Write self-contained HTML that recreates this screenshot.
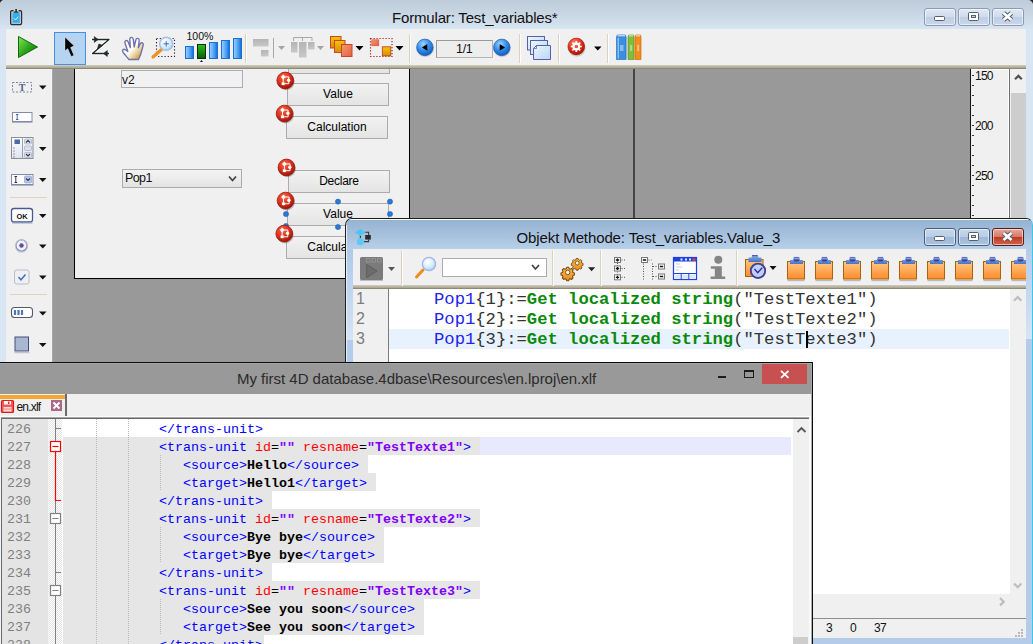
<!DOCTYPE html>
<html>
<head>
<meta charset="utf-8">
<title>Formular: Test_variables</title>
<style>
html,body{margin:0;padding:0;}
body{width:1033px;height:644px;overflow:hidden;position:relative;background:#999;font-family:"Liberation Sans",sans-serif;font-size:12px;color:#000;}
div,span,svg{position:absolute;box-sizing:border-box;}
.t{white-space:pre;line-height:1;}
/* ---------- 4D form window ---------- */
#fw{left:0;top:0;width:1033px;height:644px;background:#d8e5f2;}
#fw .title{left:0;top:0;width:1033px;height:29px;background:linear-gradient(#beccda,#c8d5e3 45%,#d7e4f1);}
#fw .cap{left:392px;top:10px;font-size:15px;letter-spacing:-0.17px;color:#111;}
.wb{border:1px solid #8c9bb3;border-radius:3px;background:linear-gradient(#dfe8f5,#cfdbec 48%,#bfcee4 52%,#cad7ea);box-shadow:inset 0 0 0 1px rgba(255,255,255,.55);}
#fw .tb{left:6px;top:29px;width:1020px;height:36px;background:#f0f0f0;}
#fw .tbb{left:6px;top:65px;width:1020px;height:4px;background:linear-gradient(#cbc7b4 0,#cbc7b4 25%,#bcb8a4 25%,#bcb8a4 50%,#adaa97 50%,#adaa97 75%,#8b8979 75%);}
#fw .work{left:6px;top:69px;width:1020px;height:575px;background:#999;}
#fw .pal{left:6px;top:69px;width:46px;height:575px;background:#f0f0f0;}
#form{left:74px;top:60px;width:336px;height:219px;background:#f0f0f0;border:1px solid #000;}
.btn{height:23px;border:1px solid #acacac;background:linear-gradient(#f2f2f2,#ebebeb 50%,#e4e4e4);font-size:12px;text-align:center;line-height:20px;color:#000;}
.rc{width:18px;height:18px;}
.wa{border-color:#4c5d7e;background:linear-gradient(#c6d7eb,#bacee6 48%,#9db8d8 52%,#abc4e0);}
.wc{border-color:#5c1a1a;background:linear-gradient(#e6aa9c,#d67a68 48%,#be3a22 52%,#d0644c);}
.sep{width:1px;background:#d8d4c4;border-right:1px solid #fff;box-sizing:content-box;}
.arr{width:0;height:0;border-left:4px solid transparent;border-right:4px solid transparent;border-top:4px solid #111;}
/* ---------- Method window ---------- */
#mw{left:345px;top:218px;width:688px;height:440px;border:1px solid #1c1c1c;border-right-color:#3cc6e8;border-radius:7px 7px 0 0;background:linear-gradient(#a9c3e6 0,#b4cceb 40px,#d6e4f5 121px,#b4cce9 121px);overflow:hidden;}
#mw .title{left:346px;top:219px;width:688px;height:31px;background:linear-gradient(#96b2d2,#a6c0dd 50%,#b8d1ea);box-shadow:inset 0 1px 0 #fafcfe;}
#mw .cap{left:516.500px;top:230px;font-size:15px;letter-spacing:-0.11px;color:#111;}
#mw .tb{left:353px;top:249px;width:673px;height:36px;background:#f0f0f0;}
#mw .tbb{left:353px;top:285px;width:673px;height:4px;background:linear-gradient(#cbc7b4 0,#cbc7b4 25%,#bcb8a4 25%,#bcb8a4 50%,#adaa97 50%,#adaa97 75%,#8b8979 75%);}
#mw .ed{left:353px;top:289px;width:673px;height:305px;background:#fff;}
.code{font-family:"Liberation Mono",monospace;font-size:17.2px;white-space:pre;line-height:20px;height:20px;left:434px;color:#333;margin-top:1px;}
.ln{font-size:16px;line-height:20px;left:356px;color:#7c7c7c;}
.kw{position:static;color:#0a8a0a;font-weight:bold;}
.v{position:static;color:#2222ee;}
/* ---------- Notepad++ window ---------- */
#np{left:0;top:362px;width:813px;height:300px;background:#999;border-top:1px solid #0a0a0a;border-right:1px solid #0a0a0a;overflow:hidden;box-shadow:inset -1px 1px 0 #a6a6a6;}
#np .cap{left:237px;top:371px;font-size:15px;letter-spacing:-0.02px;color:#2a2a2a;}
#np .tabs{left:0;top:394px;width:812px;height:22px;background:#f0f0f0;}
.xl{font-family:"Liberation Mono",monospace;font-size:13.33px;white-space:pre;line-height:18px;height:18px;color:#000;margin-top:2px;}
.xl i{font-style:normal;color:#0000ff;}
.xl b{color:#000;}
.xl u{text-decoration:none;color:#ff0000;}
.xl s{text-decoration:none;color:#8000ff;font-weight:bold;}
.sel{background:#e6e6e6;height:18px;}
.num{font-family:"Liberation Mono",monospace;font-size:13.33px;line-height:18px;color:#808080;left:7px;margin-top:2px;}
</style>
</head>
<body>
<!-- ================= 4D FORM WINDOW ================= -->
<div id="fw">
  <div class="title"></div>
  <div class="t cap">Formular: Test_variables*</div>
  <div class="wb" style="left:924px;top:8px;width:32px;height:18px;"></div>
  <div class="wb" style="left:958px;top:8px;width:32px;height:18px;"></div>
  <div class="wb" style="left:992px;top:8px;width:32px;height:18px;"></div>
  <div class="tb"></div>
  <div class="tbb"></div>
  <svg id="ftb" width="1033" height="70" viewBox="0 0 1033 70" style="left:0;top:0;">
    <defs>
      <linearGradient id="gplay" x1="0" y1="0" x2="1" y2="1"><stop offset="0" stop-color="#8ae85a"/><stop offset=".5" stop-color="#2ea81c"/><stop offset="1" stop-color="#0a6a0a"/></linearGradient>
      <linearGradient id="gbar" x1="0" y1="0" x2="1" y2="0"><stop offset="0" stop-color="#9ed0fa"/><stop offset=".6" stop-color="#4a9ff0"/><stop offset="1" stop-color="#0a6ad8"/></linearGradient>
      <linearGradient id="gbarg" x1="0" y1="0" x2="0" y2="1"><stop offset="0" stop-color="#2fc01a"/><stop offset="1" stop-color="#075c07"/></linearGradient>
      <linearGradient id="gyel" x1="0" y1="0" x2="0" y2="1"><stop offset="0" stop-color="#f7c400"/><stop offset="1" stop-color="#d38f00"/></linearGradient>
      <linearGradient id="gsal" x1="0" y1="0" x2="1" y2="1"><stop offset="0" stop-color="#f79a72"/><stop offset="1" stop-color="#e0603c"/></linearGradient>
      <radialGradient id="gblue" cx=".4" cy=".3" r=".8"><stop offset="0" stop-color="#9fd4ff"/><stop offset=".5" stop-color="#2f8be8"/><stop offset="1" stop-color="#0a4eb0"/></radialGradient>
      <radialGradient id="gred" cx=".4" cy=".3" r=".8"><stop offset="0" stop-color="#ff8a70"/><stop offset=".5" stop-color="#e2301c"/><stop offset="1" stop-color="#8e0e06"/></radialGradient>
      <radialGradient id="glens" cx=".4" cy=".35" r=".7"><stop offset="0" stop-color="#ffffff"/><stop offset=".6" stop-color="#d6ecff"/><stop offset="1" stop-color="#9ccaf5"/></radialGradient>
      <linearGradient id="ggray" x1="0" y1="0" x2="0" y2="1"><stop offset="0" stop-color="#b4b4b4"/><stop offset="1" stop-color="#c8c8c8"/></linearGradient>
    </defs>
    <!-- app icon -->
    <rect x="10.700" y="10.700" width="10.800" height="13.800" rx="1.200" fill="#e9f1fa" stroke="#2e2e2e" stroke-width="1.400"/>
    <rect x="12.300" y="12.300" width="7.600" height="10.600" fill="#35b0ec"/>
    <rect x="13.600" y="9.800" width="5" height="2.700" fill="#cfdcec"/>
    <path d="M15.300 9h1.600v2.600h1.500v1.100h-4.600v-1.100h1.500z" fill="#2e2e2e"/>
    <path d="M14 18.300l1.500 1.600 2.800-3.300" stroke="#e6f5ff" stroke-width="1" fill="none"/>
    <!-- play -->
    <path d="M18.5 36.5L37.5 47 18.5 57.5z" fill="url(#gplay)" stroke="#0c6a0c" stroke-width="1" stroke-linejoin="round"/>
    <!-- selected tool -->
    <rect x="54.500" y="32.500" width="31" height="32" fill="#b4d4f2" stroke="#4a90e2"/>
    <path d="M65 37.300v13.500l2.800-2.200 3.500 7.900 2.500-1.300-3.300-7.600 3.500-1.800z" fill="#000" stroke="#fff" stroke-opacity=".45" stroke-width=".7"/>
    <!-- Z tool -->
    <path d="M92 39.500h17L92.500 53.500H109" fill="none" stroke="#fff" stroke-width="3.600" stroke-linejoin="round" stroke-linecap="round"/>
    <path d="M92 39.500h17L92.500 53.500H109" fill="none" stroke="#1e2a2a" stroke-width="1.300" stroke-linejoin="round"/>
    <path d="M94.300 36.600l3.800 2.900-3.800 2.900zM107.300 50.600l-3.800 2.900 3.800 2.900zM102.600 45.300l-5.200 3.800 1.400-5z" fill="#1e2a2a" stroke="#1e2a2a" stroke-width=".6" stroke-linejoin="round"/>
    <!-- hand -->
    <linearGradient id="ghand" x1="0" y1="0" x2="1" y2="1"><stop offset="0" stop-color="#ffffe8"/><stop offset=".5" stop-color="#fffef6"/><stop offset=".75" stop-color="#e2c07a"/><stop offset="1" stop-color="#a87414"/></linearGradient>
    <path d="M129 59.500C127 57 125 55 123.200 52.500C121.500 50 123.500 48.500 125.500 49.800L127.800 51.500L125 43C124.300 40.500 127.300 39.600 128.200 42L130.300 47.500L129.800 39.500C129.700 36.800 133 36.600 133.300 39.300L134.200 47L135.800 40C136.300 37.500 139.500 38 139.200 40.600L138.300 47.800L140.300 43.800C141.400 41.800 143.800 42.800 143.200 45C142 49.500 141.500 54 138.500 59.500Z" fill="url(#ghand)" stroke="#7072b0" stroke-width="1.400" stroke-linejoin="round"/>
    <!-- zoom -->
    <rect x="156.500" y="38.500" width="18" height="18" fill="none" stroke="#223" stroke-width="1.100" stroke-dasharray="1.200 2"/>
    <path d="M161.500 49.500l-8.500 7.500" stroke="#f09022" stroke-width="3.200" stroke-linecap="round"/>
    <circle cx="166.200" cy="43.800" r="6.600" fill="url(#glens)" stroke="#a9bfe0" stroke-width="1.400"/>
    <path d="M163.500 43.800h5.400M166.200 41.100v5.400" stroke="#4a66a8" stroke-width="1"/>
    <!-- 100% bars -->
    <text x="186.500" y="40" font-family="Liberation Sans, sans-serif" font-size="10.500" fill="#111">100%</text>
    <rect x="185.500" y="46.500" width="8" height="12" fill="url(#gbar)" stroke="#1c6fd6"/>
    <rect x="197.500" y="44.500" width="8" height="14" fill="url(#gbarg)" stroke="#0a300a"/>
    <rect x="209.500" y="42.500" width="8" height="16" fill="url(#gbar)" stroke="#1c6fd6"/>
    <rect x="221.500" y="40.500" width="8" height="18" fill="url(#gbar)" stroke="#1c6fd6"/>
    <rect x="233.500" y="38.500" width="8" height="20" fill="url(#gbar)" stroke="#1c6fd6"/>
    <path d="M200 62l1.500-2 1.500 2z" fill="#111"/>
    <!-- separators -->
    <g stroke="#d9d3bd" stroke-width="1"><path d="M245.500 34v29M409.500 34v29M519.500 34v29M558.500 34v29M607.500 34v29"/></g>
    <g stroke="#fff" stroke-width="1"><path d="M246.500 34v29M410.500 34v29M520.500 34v29M559.500 34v29M608.500 34v29"/></g>
    <!-- gray icon 1 -->
    <rect x="253" y="39" width="15.500" height="7.500" fill="url(#ggray)"/>
    <rect x="261" y="50" width="7.500" height="6.500" fill="url(#ggray)"/>
    <path d="M273.500 38v20" stroke="#a8a8a8" stroke-width="1"/>
    <path d="M278 46h7l-3.500 4z" fill="#a4a4a4"/>
    <!-- gray icon 2 -->
    <path d="M293.500 41v-3.500h18.500V41M302.500 37.500V41" fill="none" stroke="#a8a8a8" stroke-width="1"/>
    <rect x="291" y="42" width="6.500" height="10.500" fill="url(#ggray)"/>
    <rect x="299" y="42" width="7.500" height="15.500" fill="url(#ggray)"/>
    <rect x="308" y="42" width="6.500" height="7.500" fill="url(#ggray)"/>
    <path d="M317 46h7l-3.500 4z" fill="#a4a4a4"/>
    <!-- orange stack -->
    <rect x="330.500" y="36.500" width="10.500" height="11.500" fill="url(#gyel)" stroke="#c8452c"/>
    <rect x="334.500" y="40.500" width="10.500" height="12" fill="url(#gyel)" stroke="#c8452c"/>
    <rect x="341.500" y="44.500" width="10.500" height="12" fill="url(#gsal)" stroke="#c8452c"/>
    <path d="M355.500 46h8l-4 4.500z" fill="#000"/>
    <!-- dotted selection -->
    <rect x="370.500" y="38.500" width="21.500" height="18" fill="none" stroke="#b01818" stroke-width="1.200" stroke-dasharray="1.200 1.800"/>
    <rect x="371.800" y="39.800" width="7" height="6" fill="url(#gsal)" stroke="#d05238" stroke-width=".6"/>
    <rect x="382.300" y="46.800" width="8.500" height="9" fill="url(#gyel)" stroke="#b83a20" stroke-width=".8"/>
    <path d="M395.500 46h8l-4 4.500z" fill="#000"/>
    <!-- prev / page / next -->
    <ellipse cx="425.200" cy="49" rx="8.600" ry="8.200" fill="#000" opacity=".12"/>
    <circle cx="424.900" cy="47.400" r="8.300" fill="url(#gblue)" stroke="#2a5cae" stroke-width=".7"/>
    <path d="M427.300 44v6.800l-5.300-3.400z" fill="#000"/>
    <rect x="436.500" y="40.500" width="56" height="17" fill="#ededed" stroke="#b4b4b4"/>
    <path d="M436.500 57.500v-17h56" fill="none" stroke="#9a9a9a"/>
    <text x="464.200" y="52.800" text-anchor="middle" font-family="Liberation Sans, sans-serif" font-size="12.500" letter-spacing="-.4" fill="#111">1/1</text>
    <ellipse cx="502.100" cy="49" rx="8.600" ry="8.200" fill="#000" opacity=".12"/>
    <circle cx="501.800" cy="47.400" r="8.300" fill="url(#gblue)" stroke="#2a5cae" stroke-width=".7"/>
    <path d="M499.700 44v6.800l5.300-3.400z" fill="#000"/>
    <!-- windows icon -->
    <linearGradient id="gwin" x1="0" y1="0" x2="1" y2="1"><stop offset="0" stop-color="#eef6fd"/><stop offset="1" stop-color="#b4d8f2"/></linearGradient>
    <rect x="527.500" y="36.500" width="17" height="13.500" fill="url(#gwin)" stroke="#5a5ea8"/>
    <rect x="530.500" y="40.500" width="17" height="14" fill="url(#gwin)" stroke="#5a5ea8"/>
    <path d="M533.500 48.500l3-3h14v14h-17z" fill="url(#gwin)" stroke="#5a5ea8"/>
    <path d="M533.500 48.500h3v-3" fill="none" stroke="#5a5ea8" stroke-width=".8"/>
    <!-- red gear -->
    <ellipse cx="576.800" cy="48.300" rx="8.800" ry="8.400" fill="#000" opacity=".15"/>
    <circle cx="576.300" cy="46.500" r="8.400" fill="url(#gred)" stroke="#a01c10" stroke-width=".6"/>
    <circle cx="576.300" cy="46.500" r="2.900" fill="none" stroke="#fff" stroke-width="2.200"/>
    <g stroke="#fff" stroke-width="1.700"><path d="M576.300 41v2M576.300 50v2M570.800 46.500h2M579.800 46.500h2M572.400 42.600l1.400 1.400M578.800 49l1.400 1.400M572.400 50.400l1.400-1.400M578.800 44l1.400-1.400"/></g>
    <path d="M594 46.500h7.500l-3.750 4z" fill="#000"/>
    <!-- books -->
    <path d="M616.500 37l.8-2h8l.8 2v22.500h-9.600z" fill="#3a8ee0" stroke="#2a6fc0" stroke-width=".7"/>
    <path d="M617.600 38h1.400v20.500h-1.400z" fill="#9cd0fa" opacity=".8"/>
    <path d="M617.500 35.800h7.600" stroke="#e8f4ff" stroke-width="1"/>
    <path d="M628 37l.6-2h4.800l.6 2v22.500H628z" fill="#84bc3c" stroke="#5a9426" stroke-width=".7"/>
    <path d="M635 37l.6-2h4.800l.6 2v22.500H635z" fill="#f68c1a" stroke="#cc6a0a" stroke-width=".7"/>
    <path d="M628.800 35.800h4.400M635.800 35.800h4.400" stroke="#fff" stroke-width="1" opacity=".8"/>
    <path d="M620 45h3.500v6H620zM630 45h2.200v6H630zM637 45h2.200v6H637z" fill="#fff" opacity=".4"/>
    <!-- window button glyphs -->
    <g id="wglyph">
      <rect x="934.500" y="16.500" width="10" height="4" rx="1" fill="#fff" stroke="#555d6e" stroke-width="1"/>
      <rect x="968.500" y="12.500" width="10" height="8" rx="1" fill="#fff" stroke="#555d6e" stroke-width="1"/>
      <rect x="971.500" y="15.500" width="4" height="2" fill="#c9d6ea" stroke="#555d6e" stroke-width="1"/>
      <path d="M1003.500 13l8 7M1011.500 13l-8 7" stroke="#555d6e" stroke-width="4.800" stroke-linecap="butt"/>
      <path d="M1003.500 13l8 7M1011.500 13l-8 7" stroke="#fff" stroke-width="2.700" stroke-linecap="butt"/>
    </g>
    <path d="M1029 0h4v4c-.5-2-2-3.500-4-4z" fill="#222"/>
    <path d="M0 0h3c-1.500.5-2.500 1.500-3 3z" fill="#222"/>
  </svg>
  <div class="work" style="overflow:hidden;"><div style="left:-6px;top:-69px;width:1033px;height:644px;">
    <div id="form"></div>
    <!-- v2 input -->
    <div style="left:121px;top:70px;width:122px;height:18px;border:1px solid #abadb8;background:#f1f1f1;"></div>
    <div class="t" style="left:122px;top:74px;font-size:12px;color:#111;">v2</div>
    <!-- Pop1 -->
    <div style="left:122px;top:169px;width:120px;height:19px;border:1px solid #acacac;background:linear-gradient(#f3f3f3,#ececec 50%,#e2e2e2);"></div>
    <div class="t" style="left:125px;top:172px;font-size:12.5px;letter-spacing:-0.6px;color:#111;">Pop1</div>
    <!-- buttons -->
    <div class="btn" style="left:288px;top:51px;width:102px;"></div>
    <div class="btn" style="left:287px;top:83px;width:102px;"><span class="t" style="left:0;right:0;top:4px;">Value</span></div>
    <div class="btn" style="left:286px;top:116px;width:102px;"><span class="t" style="left:0;right:0;top:4px;">Calculation</span></div>
    <div class="btn" style="left:288px;top:170px;width:102px;"><span class="t" style="left:0;right:0;top:4px;letter-spacing:-.25px;">Declare</span></div>
    <div class="btn" style="left:287px;top:203px;width:102px;"><span class="t" style="left:0;right:0;top:4px;">Value</span></div>
    <div class="btn" style="left:286px;top:236px;width:102px;"><span class="t" style="left:0;right:0;top:4px;">Calculation</span></div>
    <svg width="1033" height="644" viewBox="0 0 1033 644" style="left:0;top:0;">
      <defs>
        <radialGradient id="grc" cx=".4" cy=".3" r=".75"><stop offset="0" stop-color="#f86a4c"/><stop offset=".55" stop-color="#d8301a"/><stop offset="1" stop-color="#8a1206"/></radialGradient>
        <g id="rc">
          <circle cx=".9" cy="1.300" r="8.500" fill="#000" opacity=".22"/>
          <circle cx="0" cy="0" r="8.400" fill="url(#grc)" stroke="#a01408" stroke-width=".8"/>
          <path d="M-2.100-3.600V2M-0.200-3.600H3.500V3.200H-0.600" stroke="#fff" stroke-width="1" fill="none"/>
          <path d="M-2.100-6.100l2.400 2.500-2.400 2.500-2.400-2.500z" fill="#fff"/>
          <rect x="-3.700" y="1.800" width="3.100" height="2.800" fill="#fff"/>
          <circle cx="3.300" cy="-0.300" r="1.700" fill="#fff"/>
        </g>
      </defs>
      <path d="M229 176.500l3.500 4 3.500-4" fill="none" stroke="#444" stroke-width="1.800"/>
      <g fill="#2a78d8" stroke="#1a58b0" stroke-width=".5">
        <circle cx="338" cy="201.600" r="2.600"/><circle cx="390" cy="201.600" r="2.600"/>
        <circle cx="286" cy="214" r="2.600"/><circle cx="390" cy="214" r="2.600"/>
        <circle cx="286" cy="226" r="2.600"/><circle cx="338" cy="227" r="2.600"/><circle cx="390" cy="226.500" r="2.600"/>
      </g>
      <use href="#rc" x="285.3" y="80.5"/><use href="#rc" x="284.6" y="113.6"/><use href="#rc" x="286.5" y="167.5"/><use href="#rc" x="285.6" y="200.6"/><use href="#rc" x="284.3" y="233.6"/>
    </svg>
    <!-- vertical guide line -->
    <div style="left:633px;top:69px;width:2px;height:300px;background:#464646;"></div>
    <!-- ruler -->
    <div style="left:970px;top:69px;width:1px;height:300px;background:#111;"></div>
    <div style="left:971px;top:69px;width:38px;height:300px;background:#f0f0f0;border-right:1px solid #fff;border-top:1px solid #fff;"></div><div style="left:1009px;top:69px;width:1px;height:300px;background:#707070;"></div>
    <div class="t" style="left:975px;top:70px;font-size:12px;letter-spacing:-.75px;color:#111;">150</div>
    <div class="t" style="left:975px;top:120px;font-size:12px;letter-spacing:-.75px;color:#111;">200</div>
    <div class="t" style="left:975px;top:170px;font-size:12px;letter-spacing:-.75px;color:#111;">250</div>
    <!-- scrollbar -->
    <div style="left:1010px;top:69px;width:16px;height:300px;background:#f0f0f0;"></div>
    <div style="left:1011px;top:93px;width:15px;height:200px;background:#cdcdcd;"></div>
    <div style="left:972px;top:75px;width:2px;height:300px;background:repeating-linear-gradient(#333 0,#333 1px,transparent 1px,transparent 10px);"></div>
    <svg width="16" height="16" viewBox="0 0 16 16" style="left:1010px;top:69px;"><path d="M5 10.300l3.400-3.400 3.400 3.400" fill="none" stroke="#505050" stroke-width="2.200"/></svg>
  </div></div>
  <div class="pal"></div>
  <div style="left:52px;top:69px;width:1px;height:575px;background:#a8a8a8;"></div>
  <svg width="60" height="644" viewBox="0 0 60 644" style="left:0;top:0;">
    <defs>
      <linearGradient id="gpb" x1="0" y1="0" x2="0" y2="1"><stop offset="0" stop-color="#fff"/><stop offset="1" stop-color="#dfe3ee"/></linearGradient>
    </defs>
    <g fill="#111">
      <path d="M39 85.500h7.500l-3.750 4z"/><path d="M39 115h7.500l-3.750 4z"/><path d="M39 147h7.500l-3.750 4z"/><path d="M39 178h7.500l-3.750 4z"/>
      <path d="M39 214h7.500l-3.750 4z"/><path d="M39 244.500h7.500l-3.750 4z"/><path d="M39 275.500h7.500l-3.750 4z"/><path d="M39 311.500h7.500l-3.750 4z"/><path d="M39 343h7.500l-3.750 4z"/>
    </g>
    <path d="M10 197.500h37M10 294.500h37" stroke="#ddd6bc" stroke-width="1"/>
    <!-- text -->
    <rect x="12.500" y="82.500" width="19" height="9.500" fill="none" stroke="#7a86a4" stroke-width="1" stroke-dasharray="2 1.500"/>
    <text x="22" y="90.500" text-anchor="middle" font-family="Liberation Serif, serif" font-weight="bold" font-size="10" fill="#4c5e92">T</text>
    <!-- input -->
    <rect x="12.500" y="112.500" width="19.500" height="9" fill="#fff" stroke="#7d8cb0"/>
    <path d="M12 122.500h20.500" stroke="#b0b4c0" stroke-width="1"/>
    <path d="M16 114.500h2.400M16 119.500h2.400M17.200 114.500v5" stroke="#3c5a9a" stroke-width=".9" fill="none"/>
    <!-- list -->
    <rect x="11.500" y="137.500" width="21.500" height="21" fill="url(#gpb)" stroke="#8a8f9c"/>
    <path d="M22.500 137.500v21" stroke="#9aa0ae"/>
    <rect x="14.500" y="139.500" width="5.500" height="4.500" fill="#4a6aa8"/>
    <path d="M14 147.500v10" stroke="#445" stroke-width="1" stroke-dasharray="1 2"/>
    <rect x="24.500" y="139" width="7" height="5" rx="1" fill="#dbe1ef" stroke="#9aa3bb" stroke-width=".6"/>
    <rect x="24.500" y="146" width="7" height="4.500" rx="1" fill="#dbe1ef" stroke="#9aa3bb" stroke-width=".6"/>
    <rect x="24.500" y="152.500" width="7" height="5" rx="1" fill="#dbe1ef" stroke="#9aa3bb" stroke-width=".6"/>
    <path d="M26 142.500l2-2 2 2M26 154l2 2 2-2" stroke="#334" stroke-width="1.100" fill="none"/>
    <!-- combo -->
    <rect x="11.500" y="174.500" width="21.500" height="10" fill="#fff" stroke="#7d8cb0"/>
    <path d="M11 185.500h22.500" stroke="#b0b4c0"/>
    <path d="M14.500 176.500h2.600M14.500 182.500h2.600M15.800 176.500v6" stroke="#223" stroke-width=".9" fill="none"/>
    <rect x="24.500" y="176" width="7" height="7" rx="1" fill="#b8c6e4" stroke="#8a98bc" stroke-width=".6"/>
    <path d="M26 178.500l2 2 2-2" stroke="#2c3c6c" stroke-width="1.200" fill="none"/>
    <!-- OK -->
    <rect x="11.500" y="208.500" width="21" height="13.500" rx="2.500" fill="#fff" stroke="#4a5a90" stroke-width="1.300"/>
    <path d="M12 223h20.500" stroke="#9aa3c0" stroke-width="1"/>
    <text x="22" y="219" text-anchor="middle" font-family="Liberation Sans, sans-serif" font-weight="bold" font-size="7.500" fill="#111">OK</text>
    <!-- radio -->
    <circle cx="21.500" cy="245.500" r="5.600" fill="#eef2f8" stroke="#8696b8" stroke-width="1.400"/>
    <circle cx="21.500" cy="246.300" r="6.200" fill="none" stroke="#c4c8d2" stroke-width=".8"/>
    <circle cx="21.500" cy="245.500" r="2.200" fill="#6a4a98"/>
    <!-- check -->
    <rect x="14.500" y="270" width="14.500" height="14" rx="2" fill="#eef0f4" stroke="#b8bcc6"/>
    <path d="M18.500 277l2.500 2.800 4.500-5.300" stroke="#3c74c0" stroke-width="1.500" fill="none"/>
    <!-- progress -->
    <rect x="11.500" y="307.500" width="21" height="10" rx="3" fill="#fff" stroke="#555a6a" stroke-width="1.100"/>
    <path d="M15 310v5M18.500 310v5M22 310v5" stroke="#4a78b4" stroke-width="2.200"/>
    <!-- square -->
    <rect x="15" y="337" width="13.500" height="14" fill="#a8b8d0" stroke="#444c7c" stroke-width="1"/>
    <path d="M14.500 352.500h15" stroke="#c0c4cc" stroke-width="1.500"/>
  </svg>
</div>
<!-- ================= METHOD WINDOW ================= -->
<div id="mw"><div id="mwi" style="left:-346px;top:-219px;width:1033px;height:660px;">
  <div class="title"></div>
  <div class="t cap">Objekt Methode: Test_variables.Value_3</div>
  <div class="wb wa" style="left:924px;top:228px;width:32px;height:18px;"></div>
  <div class="wb wa" style="left:958px;top:228px;width:32px;height:18px;"></div>
  <div class="wb wc" style="left:992px;top:228px;width:32px;height:18px;"></div>
  <div class="tb"></div>
  <div class="tbb"></div>
  <div class="ed"></div>
  <!-- gutter -->
  <div style="left:353px;top:289px;width:35px;height:305px;background:#f0f0f0;"></div>
  <div style="left:388px;top:289px;width:1px;height:305px;background:#7c7c7c;"></div>
  <div style="left:389px;top:329px;width:620px;height:20px;background:#e8f2fe;"></div>
  <div class="t ln" style="top:289px;">1</div>
  <div class="t ln" style="top:309px;">2</div>
  <div class="t ln" style="top:329px;">3</div>
  <div class="code" style="top:289px;"><span class="v">Pop1</span>{1}:=<span class="kw">Get localized string</span>("TestTexte1")</div>
  <div class="code" style="top:309px;"><span class="v">Pop1</span>{2}:=<span class="kw">Get localized string</span>("TestTexte2")</div>
  <div class="code" style="top:329px;"><span class="v">Pop1</span>{3}:=<span class="kw">Get localized string</span>("TestTexte3")</div>
  <div style="left:806px;top:331px;width:2px;height:17px;background:#000;"></div>
  <!-- search box -->
  <div style="left:442px;top:258px;width:105px;height:19px;background:#fff;border:1px solid #abadb3;"></div>
  <!-- scrollbars -->
  <div style="left:1010px;top:289px;width:16px;height:305px;background:#f0f0f0;"></div>
  <div style="left:353px;top:594px;width:673px;height:24px;background:#f0f0f0;"></div>
  <div style="left:353px;top:618px;width:673px;height:1px;background:#8e8e8e;"></div>
  <div style="left:353px;top:619px;width:673px;height:19px;background:#f0f0f0;"></div>
  <div class="t" style="left:826px;top:622px;font-size:12px;color:#111;">3</div>
  <div class="t" style="left:850px;top:622px;font-size:12px;color:#111;">0</div>
  <div class="t" style="left:874px;top:622px;font-size:12px;letter-spacing:-.6px;color:#111;">37</div>
    <svg width="1033" height="644" viewBox="0 0 1033 644" style="left:0;top:0;">
    <defs>
      <linearGradient id="gcb" x1="0" y1="0" x2="0" y2="1"><stop offset="0" stop-color="#ffc888"/><stop offset=".45" stop-color="#ffad5c"/><stop offset="1" stop-color="#ff8a2c"/></linearGradient>
      <linearGradient id="gcl" x1="0" y1="0" x2="0" y2="1"><stop offset="0" stop-color="#8ab0e8"/><stop offset="1" stop-color="#4a74c0"/></linearGradient>
      <linearGradient id="ggear" x1="0" y1="0" x2="0" y2="1"><stop offset="0" stop-color="#fbc050"/><stop offset="1" stop-color="#e88c18"/></linearGradient>
      <g id="clip">
        <rect x=".5" y="280" width="17" height="1.200" fill="#000" opacity=".22"/>
        <rect x=".5" y="261.500" width="17" height="17.500" fill="url(#gcb)" stroke="#a86408" stroke-width="1"/>
        <path d="M3 264v-4h2.800l.9-2.800h5.600l.9 2.800H16v4z" fill="url(#gcl)"/>
        <path d="M6.300 259.600h6.400l-1.300 1.800H7.600z" fill="#3f3f92"/>
        <path d="M6.900 257.500h5.200" stroke="#6a6cc4" stroke-width="1.200"/>
      </g>
      <g id="gear">
        <path d="M-1.300-6.500h2.600l.5 1.800 1.700.7 1.600-.9 1.800 1.800-.9 1.600.7 1.700 1.800.5v2.600l-1.800.5-.7 1.700.9 1.600-1.800 1.800-1.600-.9-1.700.7-.5 1.800h-2.600l-.5-1.800-1.700-.7-1.600.9-1.800-1.800.9-1.600-.7-1.700-1.800-.5v-2.600l1.800-.5.700-1.700-.9-1.600 1.800-1.800 1.600.9 1.700-.7z" fill="url(#ggear)" stroke="#7a480c" stroke-width="1.300" stroke-linejoin="round"/>
        <circle r="2.900" fill="#f0f0f0" stroke="#7a480c" stroke-width="1.200"/>
      </g>
    </defs>
    <!-- window icon -->
    <path d="M365 232.300h3.600V235M368.600 239.500v2.100H364" fill="none" stroke="#3a3a3a" stroke-width="1.100"/>
    <path d="M360.400 235.500v3" stroke="#3a3a3a" stroke-width="1.200"/>
    <path d="M360.300 228.700l5.300 3.600-5.300 3.600-5.300-3.600z" fill="#4fc4f4"/>
    <circle cx="360.400" cy="241.700" r="3.600" fill="#5ccaf6"/>
    <rect x="365.200" y="235" width="5.600" height="4.600" fill="#2a2a2a"/>
    <!-- win glyphs -->
    <use href="#wglyph" x="0" y="220"/>
    <!-- run icon -->
    <rect x="360" y="257" width="23" height="23" rx="1.500" fill="#7b7b7b"/>
    <path d="M360 280.500h23" stroke="#bdbdbd" stroke-width="1"/>
    <path d="M366.500 264.500l10.500 6.500-10.500 6.500z" fill="#6c6c6c" stroke="#626262" stroke-width="1.200" stroke-linejoin="round"/>
    <g fill="none" stroke="#979797" stroke-width=".8"><rect x="366.500" y="258.500" width="3.500" height="3.500"/><rect x="372" y="258.500" width="3.500" height="3.500"/><rect x="377.500" y="258.500" width="3.500" height="3.500"/></g>
    <path d="M388 267h7l-3.500 4z" fill="#555"/>
    <!-- separators -->
    <g stroke="#d9d3bd" stroke-width="1"><path d="M401.500 250v36M552.500 250v36M600.500 250v36M736.500 250v36"/></g>
    <g stroke="#fbfbfb" stroke-width="1"><path d="M402.500 250v36M553.500 250v36M601.500 250v36M737.500 250v36"/></g>
    <!-- magnifier -->
    <path d="M423 270l-6.500 7" stroke="#ee8c1c" stroke-width="3" stroke-linecap="round"/>
    <circle cx="429" cy="264" r="6.600" fill="url(#glens)" stroke="#a4b4e4" stroke-width="1.300"/>
    <path d="M532 265l3.500 4 3.500-4" fill="none" stroke="#444" stroke-width="1.800"/>
    <!-- gears -->
    <g transform="translate(567.700 272.400) scale(.79)"><use href="#gear"/></g>
    <g transform="translate(577.200 263) scale(.69)"><use href="#gear"/></g>
    <path d="M588 267.200h7.200l-3.600 4z" fill="#222"/>
    <!-- expand -->
    <g fill="#fff" stroke="#777" stroke-width="1">
      <rect x="614.500" y="257.500" width="6" height="5"/><rect x="614.500" y="266" width="6" height="5"/><rect x="614.500" y="274.800" width="6" height="5"/>
      <rect x="641.500" y="257.500" width="6" height="5"/><rect x="658.500" y="264" width="6" height="5"/><rect x="658.500" y="274" width="6" height="5"/>
    </g>
    <g stroke="#111" stroke-width="1.300" fill="none">
      <path d="M615.800 260h3.400M617.500 258.500v3M615.800 268.500h3.400M617.500 267v3M615.800 277.300h3.400M617.500 275.800v3"/>
      <path d="M642.800 260h3.400M659.800 266.500h3.400M659.800 276.500h3.400"/>
    </g>
    <g stroke="#555" stroke-width="1" stroke-dasharray="1 1.500" fill="none">
      <path d="M621.500 260h4M621.500 268.500h4M621.500 277.300h4M617.500 263v3M617.500 271.500v3"/>
      <path d="M648.500 260h3M643.500 263.500v17M652.500 263.500v17M653 266.500h5M653 276.500h5"/>
    </g>
    <!-- table icon -->
    <rect x="673.500" y="257.500" width="23" height="22" fill="#fff" stroke="#1f3fe0" stroke-width="1.200"/>
    <rect x="673.500" y="257.500" width="23" height="4" fill="#1f3fe0"/>
    <path d="M680.500 258.500h2v2h-2zM685 258.500h2v2h-2zM689 258.500h2v2h-2z" fill="#dfe8ff"/>
    <rect x="692.500" y="258.300" width="3" height="2.600" fill="#e83a3a"/>
    <path d="M674 273.500h22" stroke="#1f3fe0" stroke-width="1"/>
    <path d="M675 274.500h5.500v4H675zM682 274.500h6v4h-6zM689.500 274.500h5.500v4h-5.500z" fill="#d6e8fc"/>
    <path d="M681.200 274v5.500M688.800 274v5.500" stroke="#1f3fe0" stroke-width="1"/>
    <path d="M676 264h4M676 267h6M676 270h3" stroke="#d0d0d0" stroke-width="1"/>
    <!-- info -->
    <circle cx="718.300" cy="259.800" r="4" fill="#858585"/>
    <path d="M710.800 266.300h11v10.200h3.400v2.600h-14.600v-2.600h4.200v-7.700h-4z" fill="#858585"/>
    <!-- clipboard clock -->
    <rect x="745.500" y="259.500" width="17.500" height="17" fill="url(#gcb)" stroke="#a86408"/>
    <path d="M748.500 262v-4.500h3l.8-2.500h5.400l.8 2.500h3V262z" fill="url(#gcl)"/>
    <path d="M752 255.600h5.600" stroke="#5a58b4" stroke-width="1.200"/>
    <circle cx="758" cy="270.800" r="7.200" fill="#c2cef6" stroke="#3f4194" stroke-width="1.900"/>
    <path d="M754.500 269l3.200 3.600 4.600-5" fill="none" stroke="#2c2e8c" stroke-width="1.400"/>
    <path d="M769.500 266h7l-3.500 4z" fill="#111"/>
    <!-- clipboards -->
    <use href="#clip" x="787" y="0"/><use href="#clip" x="815" y="0"/><use href="#clip" x="843" y="0"/><use href="#clip" x="871" y="0"/><use href="#clip" x="899" y="0"/><use href="#clip" x="927" y="0"/><use href="#clip" x="955" y="0"/><use href="#clip" x="983" y="0"/><use href="#clip" x="1011" y="0"/>
    <!-- scroll arrows -->
    <path d="M1014 300.800l3.700-3.700 3.700 3.700" fill="none" stroke="#bdbdbd" stroke-width="2.200"/>
    <path d="M1014 583.500l3.700 3.700 3.700-3.700" fill="none" stroke="#bdbdbd" stroke-width="2.200"/>
    <path d="M1000 598l3.700 3.700-3.700 3.700" fill="none" stroke="#bdbdbd" stroke-width="2.200"/>
    <g fill="#b8b8b8"><rect x="1021" y="629" width="2" height="2"/><rect x="1021" y="632" width="2" height="2"/><rect x="1021" y="635" width="2" height="2"/><rect x="1018" y="632" width="2" height="2"/><rect x="1018" y="635" width="2" height="2"/><rect x="1015" y="635" width="2" height="2"/></g>
  </svg>
  <div style="left:1026px;top:249px;width:6px;height:400px;background:linear-gradient(#b4cceb 0,#d6e4f5 90px,#b4cce9 90px);"></div>
  <div style="left:346px;top:225px;width:1px;height:420px;background:#e8f0fa;"></div>
</div></div>
<!-- ================= NOTEPAD++ WINDOW ================= -->
<div id="np"><div style="left:0;top:-363px;width:1033px;height:660px;">
  <div class="t cap">My first 4D database.4dbase\Resources\en.lproj\en.xlf</div>
  <div style="left:762px;top:364px;width:45px;height:20px;background:#c75050;"></div>
  <div class="tabs"></div>
  <!-- tab -->
  <div style="left:0;top:395px;width:65px;height:4px;background:#f7a634;"></div>
  <div style="left:65px;top:394px;width:2px;height:22px;background:#6c6c6c;"></div>
  <div class="t" style="left:16.500px;top:401px;font-size:12px;letter-spacing:-.8px;color:#111;">en.xlf</div>
  <div style="left:51px;top:400px;width:11px;height:11px;background:#a9698a;"></div>
  <!-- editor -->
  <div style="left:0;top:416px;width:812px;height:1px;background:#fcfcfc;"></div>
  <div style="left:0;top:417px;width:812px;height:1px;background:#a6a6a6;"></div>
  <div style="left:1px;top:418px;width:810px;height:230px;background:#fff;border-top:1px solid #696969;border-left:1px solid #696969;"></div>
  <div style="left:0;top:417px;width:1px;height:230px;background:#f4f4f4;"></div>
  <div style="left:2px;top:419px;width:46px;height:230px;background:#e4e4e4;"></div>
  <div style="left:48px;top:419px;width:14px;height:230px;background:repeating-conic-gradient(#ffffff 0 25%,#e4e4e4 0 50%) 0 0/2px 2px;"></div>
  <div class="t num" style="top:419px;">226</div>
  <div class="xl" style="left:159px;top:419px;"><i>&lt;/trans-unit&gt;</i></div>
  <div class="sel" style="left:63px;top:437px;width:417px;"></div>
  <div style="left:480px;top:437px;width:311px;height:18px;background:#e8e8ff;"></div>
  <div class="t num" style="top:437px;">227</div>
  <div class="xl" style="left:159px;top:437px;"><i>&lt;trans-unit</i> <u>id</u>=<s>""</s> <u>resname</u>=<s>"TestTexte1"</s><i>&gt;</i></div>
  <div class="sel" style="left:63px;top:455px;width:305px;"></div>
  <div class="t num" style="top:455px;">228</div>
  <div class="xl" style="left:183px;top:455px;"><i>&lt;source&gt;</i><b>Hello</b><i>&lt;/source&gt;</i></div>
  <div class="sel" style="left:63px;top:473px;width:313px;"></div>
  <div class="t num" style="top:473px;">229</div>
  <div class="xl" style="left:183px;top:473px;"><i>&lt;target&gt;</i><b>Hello1</b><i>&lt;/target&gt;</i></div>
  <div class="sel" style="left:63px;top:491px;width:209px;"></div>
  <div class="t num" style="top:491px;">230</div>
  <div class="xl" style="left:159px;top:491px;"><i>&lt;/trans-unit&gt;</i></div>
  <div class="sel" style="left:63px;top:509px;width:417px;"></div>
  <div class="t num" style="top:509px;">231</div>
  <div class="xl" style="left:159px;top:509px;"><i>&lt;trans-unit</i> <u>id</u>=<s>""</s> <u>resname</u>=<s>"TestTexte2"</s><i>&gt;</i></div>
  <div class="sel" style="left:63px;top:527px;width:321px;"></div>
  <div class="t num" style="top:527px;">232</div>
  <div class="xl" style="left:183px;top:527px;"><i>&lt;source&gt;</i><b>Bye bye</b><i>&lt;/source&gt;</i></div>
  <div class="sel" style="left:63px;top:545px;width:321px;"></div>
  <div class="t num" style="top:545px;">233</div>
  <div class="xl" style="left:183px;top:545px;"><i>&lt;target&gt;</i><b>Bye bye</b><i>&lt;/target&gt;</i></div>
  <div class="sel" style="left:63px;top:563px;width:209px;"></div>
  <div class="t num" style="top:563px;">234</div>
  <div class="xl" style="left:159px;top:563px;"><i>&lt;/trans-unit&gt;</i></div>
  <div class="sel" style="left:63px;top:581px;width:417px;"></div>
  <div class="t num" style="top:581px;">235</div>
  <div class="xl" style="left:159px;top:581px;"><i>&lt;trans-unit</i> <u>id</u>=<s>""</s> <u>resname</u>=<s>"TestTexte3"</s><i>&gt;</i></div>
  <div class="sel" style="left:63px;top:599px;width:361px;"></div>
  <div class="t num" style="top:599px;">236</div>
  <div class="xl" style="left:183px;top:599px;"><i>&lt;source&gt;</i><b>See you soon</b><i>&lt;/source&gt;</i></div>
  <div class="sel" style="left:63px;top:617px;width:361px;"></div>
  <div class="t num" style="top:617px;">237</div>
  <div class="xl" style="left:183px;top:617px;"><i>&lt;target&gt;</i><b>See you soon</b><i>&lt;/target&gt;</i></div>
  <div class="sel" style="left:63px;top:635px;width:201px;"></div>
  <div class="t num" style="top:635px;">238</div>
  <div class="xl" style="left:159px;top:635px;"><i>&lt;/trans-unit&gt;</i></div>
  <!-- scrollbar -->
  <div style="left:793px;top:419px;width:16px;height:230px;background:#f0f0f0;"></div>
  <div style="left:809px;top:417px;width:2px;height:230px;background:#fafafa;"></div><div style="left:811px;top:394px;width:1px;height:260px;background:#b0b0b0;"></div>
  <div style="left:793px;top:637px;width:15px;height:10px;background:#cdcdcd;"></div>
  <svg width="1033" height="644" viewBox="0 0 1033 644" style="left:0;top:0;">
    <!-- caption buttons -->
    <rect x="718" y="376" width="8" height="2" fill="#1c1c1c"/>
    <rect x="744.500" y="371" width="9" height="6.500" fill="none" stroke="#1c1c1c" stroke-width="1"/>
    <rect x="744" y="370" width="10" height="2" fill="#1c1c1c"/>
    <path d="M781 370.800l7.500 7M788.500 370.800l-7.500 7" stroke="#fff" stroke-width="1.800"/>
    <!-- disk icon -->
    <rect x="1.500" y="400.500" width="12" height="12" rx="1" fill="#f25a5a" stroke="#d81c1c" stroke-width="1.200"/>
    <rect x="4" y="401" width="7" height="3.500" fill="#fff"/>
    <rect x="8" y="401.500" width="1.500" height="2.500" fill="#e03030"/>
    <rect x="3.500" y="407" width="8" height="4.500" fill="#fbdada"/>
    <path d="M3.500 409h8" stroke="#e86a6a" stroke-width=".8"/>
    <path d="M53.500 402.500l6 6M59.500 402.500l-6 6" stroke="#fff" stroke-width="2"/>
    <!-- fold margin -->
    <path d="M55.500 419v225" stroke="#808080" stroke-width="1"/>
    <path d="M55.500 428.500h5.500M55.500 572.500h5.500M55.500 644.500h5.500" stroke="#808080" stroke-width="1"/>
    <path d="M55.500 446v54.500h5.500" stroke="#ff0000" stroke-width="1.200" fill="none"/>
    <g fill="#fff" stroke-width="1.200">
      <rect x="50.500" y="441.500" width="10" height="10" stroke="#ff0000"/>
      <rect x="50.500" y="513.500" width="10" height="10" stroke="#808080"/>
      <rect x="50.500" y="585.500" width="10" height="10" stroke="#808080"/>
    </g>
    <path d="M52.500 446.500h6" stroke="#ff0000" stroke-width="1.200"/>
    <path d="M52.500 518.500h6M52.500 590.500h6" stroke="#808080" stroke-width="1.200"/>
    <!-- indent guides -->
    <g stroke="#b8b8b8" stroke-width="1" stroke-dasharray="1 1">
      <path d="M96.500 419v225M128.500 419v225"/>
      <path d="M160.500 455v36M160.500 527v36M160.500 599v36"/>
    </g>
    <path d="M797.500 432l4-4 4 4" fill="none" stroke="#555" stroke-width="1.800"/>
  </svg>
</div></div>
</body>
</html>
